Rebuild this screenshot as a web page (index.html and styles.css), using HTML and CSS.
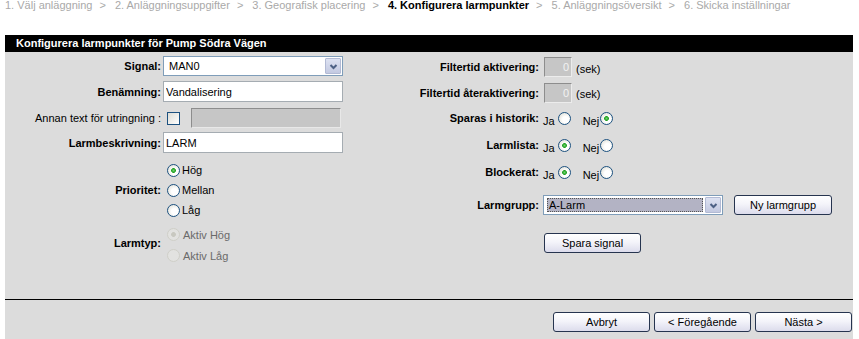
FILE: index.html
```html
<!DOCTYPE html>
<html lang="sv">
<head>
<meta charset="utf-8">
<title>Konfigurera larmpunkter</title>
<link rel="stylesheet" href="styles.css">
</head>
<body>
<div class="crumbs">
  <span class="step">1. Välj anläggning</span><span class="sep">&gt;</span>
  <span class="step">2. Anläggningsuppgifter</span><span class="sep">&gt;</span>
  <span class="step">3. Geografisk placering</span><span class="sep">&gt;</span>
  <span class="step current">4. Konfigurera larmpunkter</span><span class="sep">&gt;</span>
  <span class="step">5. Anläggningsöversikt</span><span class="sep">&gt;</span>
  <span class="step">6. Skicka inställningar</span>
</div>

<div class="panel">
  <div class="panel-head">Konfigurera larmpunkter för Pump Södra Vägen</div>
  <div class="panel-body">
    <div class="grid-left">
      <label class="lbl">Signal:</label>
      <div class="select w180">
        <span class="select-text">MAN0</span>
        <span class="select-arrow"><svg width="13" height="15" viewBox="0 0 13 15"><path d="M3.5 6 L6.5 9 L9.5 6" fill="none" stroke="#4d6185" stroke-width="2"/></svg></span>
      </div>

      <label class="lbl">Benämning:</label>
      <div class="field"><input class="text w180" type="text" value="Vandalisering"></div>

      <label class="lbl normal">Annan text för utringning :</label>
      <div class="field row-annan">
        <input class="check" type="checkbox">
        <input class="text disabled w150" type="text" disabled>
      </div>

      <label class="lbl">Larmbeskrivning:</label>
      <div class="field"><input class="text w180" type="text" value="LARM"></div>

      <label class="lbl">Prioritet:</label>
      <div class="stack">
        <label class="opt"><input class="radio" type="radio" name="prio" checked><span>Hög</span></label>
        <label class="opt"><input class="radio" type="radio" name="prio"><span>Mellan</span></label>
        <label class="opt"><input class="radio" type="radio" name="prio"><span>Låg</span></label>
      </div>

      <label class="lbl lbl-typ">Larmtyp:</label>
      <div class="stack stack-typ">
        <label class="opt dis"><input class="radio" type="radio" name="typ" checked disabled><span>Aktiv Hög</span></label>
        <label class="opt dis"><input class="radio" type="radio" name="typ" disabled><span>Aktiv Låg</span></label>
      </div>
    </div>

    <div class="grid-right">
      <label class="lbl">Filtertid aktivering:</label>
      <div class="field"><input class="num" type="text" value="0" disabled><span class="unit">(sek)</span></div>

      <label class="lbl">Filtertid återaktivering:</label>
      <div class="field"><input class="num" type="text" value="0" disabled><span class="unit">(sek)</span></div>

      <label class="lbl">Sparas i historik:</label>
      <div class="yn">
        <span class="yn-t">Ja</span><input class="radio" type="radio" name="hist">
        <span class="yn-t nej">Nej</span><input class="radio" type="radio" name="hist" checked>
      </div>

      <label class="lbl">Larmlista:</label>
      <div class="yn">
        <span class="yn-t">Ja</span><input class="radio" type="radio" name="lista" checked>
        <span class="yn-t nej">Nej</span><input class="radio" type="radio" name="lista">
      </div>

      <label class="lbl">Blockerat:</label>
      <div class="yn">
        <span class="yn-t">Ja</span><input class="radio" type="radio" name="block" checked>
        <span class="yn-t nej">Nej</span><input class="radio" type="radio" name="block">
      </div>

      <label class="lbl">Larmgrupp:</label>
      <div class="field">
        <div class="select w180 focused">
          <span class="select-text"><span class="sel-hl">A-Larm</span></span>
          <span class="select-arrow"><svg width="13" height="15" viewBox="0 0 13 15"><path d="M3.5 6 L6.5 9 L9.5 6" fill="none" stroke="#4d6185" stroke-width="2"/></svg></span>
        </div>
        <button class="btn btn-ny" type="button">Ny larmgrupp</button>
      </div>

      <span></span>
      <div class="field"><button class="btn btn-save" type="button">Spara signal</button></div>
    </div>
  </div>
  <div class="panel-foot">
    <button class="btn foot" type="button">Avbryt</button>
    <button class="btn foot" type="button">&lt; Föregående</button>
    <button class="btn foot" type="button">Nästa &gt;</button>
  </div>
</div>
</body>
</html>
```

FILE: styles.css
```css
html, body {
  margin: 0;
  padding: 0;
  background: #ffffff;
  font-family: "Liberation Sans", Arial, sans-serif;
  font-size: 11px;
  color: #000;
}

.crumbs {
  display: flex;
  align-items: baseline;
  padding-left: 5px;
  line-height: 11px;
  height: 35px;
  color: #a9a9a9;
  white-space: nowrap;
}
.crumbs .sep {
  margin: 0 9px 0 7px;
}
.crumbs .current {
  color: #000;
  font-weight: bold;
}

.panel {
  margin-left: 5px;
  width: 848px;
  background: #dcdcdc;
}
.panel-head {
  height: 17px;
  line-height: 17px;
  background: #000;
  color: #fff;
  font-weight: bold;
  padding-left: 11px;
}
.panel-body {
  display: flex;
  height: 247px;
  border-bottom: 1px solid #000;
}

.grid-left {
  display: grid;
  grid-template-columns: 156px 182px;
  grid-template-rows: 20px 31px 22px 27px 68px 42px;
  column-gap: 2px;
  align-items: center;
  padding-top: 4px;
}
.grid-right {
  display: grid;
  grid-template-columns: 130px 300px;
  grid-template-rows: 22px 29px 22px 32px 22px 44px 31px;
  column-gap: 4px;
  align-items: center;
  padding-top: 4px;
  margin-left: 64px;
}

.lbl {
  text-align: right;
  font-weight: bold;
  white-space: nowrap;
  color: #000;
}
.lbl.normal { font-weight: normal; }
.lbl-typ { padding-bottom: 5px; }

.field {
  display: flex;
  align-items: center;
}

/* text inputs */
.text {
  box-sizing: border-box;
  height: 21px;
  border: 1px solid #a5acb2;
  background: #fff;
  font: 11px "Liberation Sans", Arial, sans-serif;
  color: #000;
  padding: 0 2px;
  margin: 0;
  outline: none;
}
.w180 { width: 180px; }
.w150 { width: 150px; }
.text.disabled {
  height: 20px;
  background: #c6c6c6;
  border-color: #8d8d8d #e8e8e8 #e8e8e8 #8d8d8d;
}
.row-annan .check { margin: 0 11px 0 4px; }

.num {
  box-sizing: border-box;
  width: 28px;
  height: 20px;
  margin: 0 4px 0 1px;
  padding: 0 2px;
  background: #c6c6c6;
  border: 1px solid;
  border-color: #8d8d8d #ececec #ececec #8d8d8d;
  font: 11px "Liberation Sans", Arial, sans-serif;
  color: #f2f2f2;
  text-align: right;
}
.unit { padding-top: 3px; }

/* select look-alike */
.select {
  box-sizing: border-box;
  display: flex;
  align-items: stretch;
  height: 20px;
  border: 1px solid #7f9db9;
  background: #fff;
}
.select-text {
  flex: 1;
  display: flex;
  align-items: center;
  padding-left: 5px;
}
.select-arrow {
  width: 16px;
  margin: 1px;
  box-sizing: border-box;
  border: 1px solid #b2bad4;
  border-radius: 1px;
  background: linear-gradient(#dde2f2, #c3c9e1);
  display: flex;
  align-items: center;
  justify-content: center;
}
.focused .select-text { padding: 2px 1px 2px 3px; }
.sel-hl {
  flex: 1;
  align-self: stretch;
  display: flex;
  align-items: center;
  padding-left: 2px;
  background: #b3b3c4;
  outline: 1px dotted #555;
  outline-offset: -1px;
}

/* radios and checkboxes */
.radio, .check {
  -webkit-appearance: none;
  appearance: none;
  box-sizing: border-box;
  width: 13px;
  height: 13px;
  margin: 0;
  border: 1px solid #1c5180;
  background: radial-gradient(circle at 60% 60%, #ffffff 0, #ffffff 3px, #e6e6df 7px);
  flex: none;
}
.radio { border-radius: 50%; }
.check { background: linear-gradient(135deg, #dcdcd5, #ffffff); }
.radio:checked {
  background:
    radial-gradient(circle, #6fd36f 0, #21a121 2px, rgba(33,161,33,0) 2.8px),
    radial-gradient(circle at 60% 60%, #ffffff 0, #ffffff 3px, #e6e6df 7px);
}
.radio:disabled {
  border-color: #cfcfc8;
  background: #e2e2e0;
}
.radio:disabled:checked {
  background:
    radial-gradient(circle, #c8c8c0 0, #c8c8c0 2px, rgba(0,0,0,0) 2.8px),
    #e2e2e0;
}

.stack {
  display: flex;
  flex-direction: column;
  padding-left: 4px;
}
.opt {
  display: flex;
  align-items: center;
  height: 20px;
  gap: 2px;
}
.stack-typ .opt { height: 21px; }
.opt.dis { color: #6a6a6a; }
.opt.dis span { padding-left: 1px; }

.yn {
  display: flex;
  align-items: center;
}
.yn-t { padding-top: 5px; margin-right: 3px; }
.yn-t.nej { margin-left: 12px; margin-right: 1px; }

/* buttons */
.btn {
  box-sizing: border-box;
  width: 97px;
  height: 20px;
  padding: 0;
  margin: 0;
  border: 1px solid #26344f;
  border-radius: 3px;
  background: linear-gradient(#ffffff 0%, #f4f4fa 45%, #dcdcec 100%);
  font: 11px "Liberation Sans", Arial, sans-serif;
  color: #000;
}
.field .btn-ny { margin-left: 11px; width: 98px; }
.field .btn-save { margin-left: 1px; }

.panel-foot {
  display: flex;
  justify-content: flex-end;
  gap: 4px;
  padding: 12px 1px 0 0;
  height: 40px;
}
.btn.foot { width: 97px; height: 20px; }
```
